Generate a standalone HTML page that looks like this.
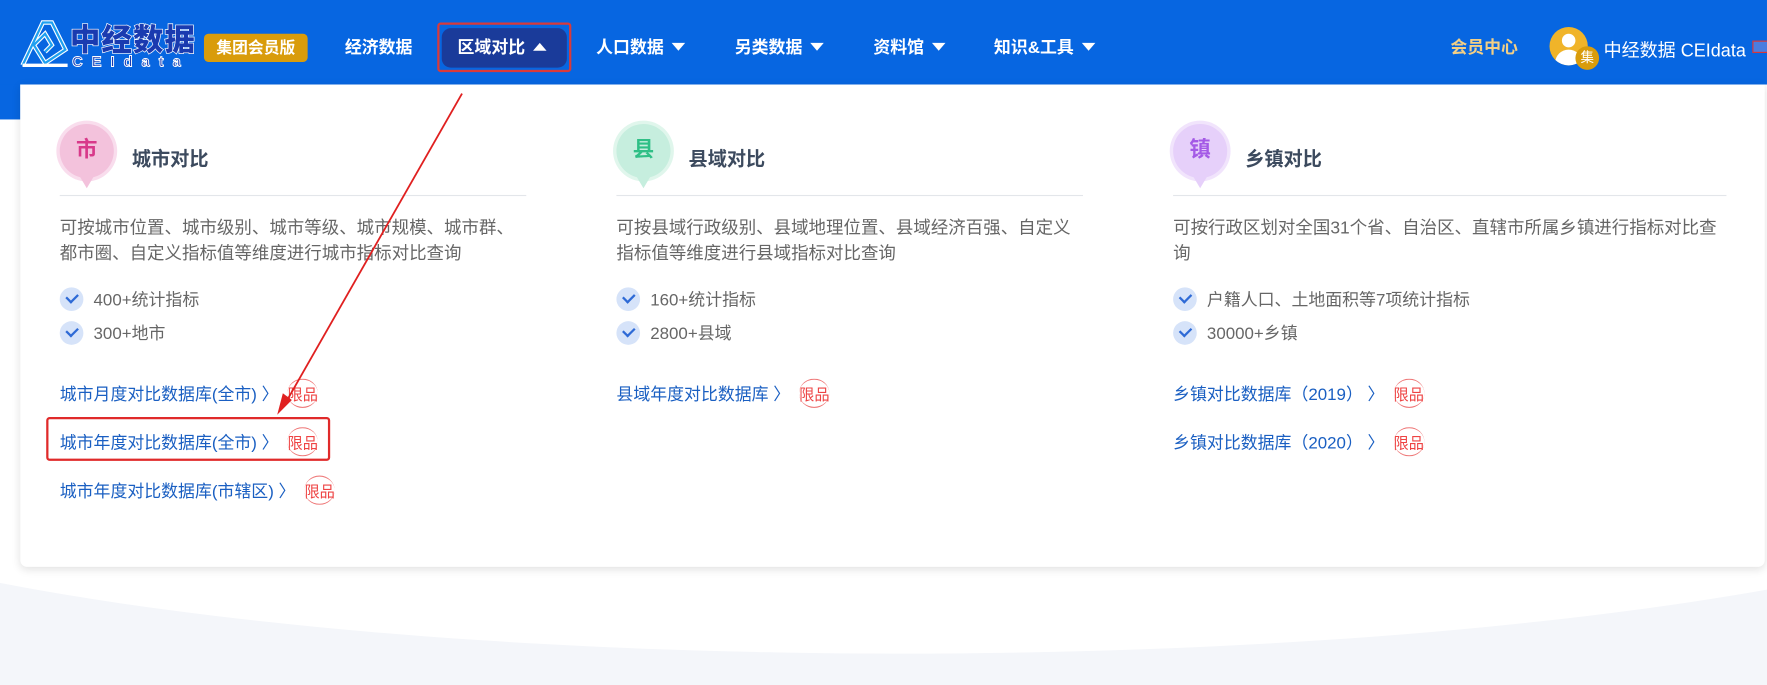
<!DOCTYPE html>
<html><head><meta charset="utf-8"><style>
*{margin:0;padding:0;box-sizing:border-box}
html,body{width:1767px;height:685px;overflow:hidden;background:#f4f6fa}
body{font-family:"Liberation Sans","Noto Sans CJK SC",sans-serif}
#w{position:absolute;left:0;top:0;width:1568px;height:608px;transform:scale(1.12691);transform-origin:0 0;background:#f4f6fa;overflow:hidden}
.abs{position:absolute}
.hdr{left:0;top:0;width:1568px;height:75px;background:#0766e1}
.nav{color:#fff;font-size:15px;font-weight:bold;top:31px;white-space:nowrap}
.tri{display:inline-block;width:0;height:0;border-left:6px solid transparent;border-right:6px solid transparent;border-top:7px solid #fff;margin-left:7px;vertical-align:2px}
.triu{border-top:none;border-bottom:7px solid #fff}
.panel{left:18px;top:75px;width:1548px;height:428px;background:#fff;border-radius:0 0 6px 6px;box-shadow:0 2px 8px rgba(0,0,0,.12)}
.col{position:absolute;top:0;width:414px}
.ic{position:absolute;left:0;top:35px;width:48px;height:48px;border-radius:50%;font-size:19px;font-weight:bold;text-align:center;line-height:48px}
.ic:after{content:"";position:absolute;left:18px;bottom:-9px;border-left:6px solid transparent;border-right:6px solid transparent;border-top:10px solid var(--c)}
.tt{position:absolute;left:64px;top:52px;font-size:17px;font-weight:bold;color:#3c4a5e}
.sep{position:absolute;left:0;top:98px;height:1px;background:#e3e6ea}
.ds{position:absolute;left:0;top:116px;font-size:15.5px;line-height:23px;color:#666}
.ck{position:absolute;left:0;font-size:15px;color:#666;white-space:nowrap}
.ck i{display:inline-block;width:21px;height:21px;border-radius:50%;background:#d6e3f9;vertical-align:-5px;margin-right:9px;position:relative}
.ck i:after{content:"";position:absolute;left:6px;top:5px;width:8px;height:5px;border-left:2px solid #2e6ad6;border-bottom:2px solid #2e6ad6;transform:rotate(-45deg)}
.lk{position:absolute;left:0;font-size:15px;color:#1a5fc2;white-space:nowrap}
.lk b{font-weight:normal;color:#e44;font-size:13.5px;margin-left:8px;display:inline-block;border-top:1px solid #e77;border-bottom:1px solid #e77;border-radius:50%;padding:2px 0}
</style></head><body><div id="w">
<div class="abs" style="left:0;top:0;width:1568px;height:480px;background:#fff"></div>
<div class="abs" style="left:-300px;top:180px;width:2200px;height:400px;border-radius:50%;background:#fff"></div>
<div class="abs" style="left:0;top:0;width:18px;height:106px;background:#0766e1"></div>
<div class="abs hdr"></div>
<svg class="abs" style="left:16px;top:16px" width="46" height="46" viewBox="0 0 46 46"><path d="M4 42 L22 4 L30 4 L42 28 L24 40 L14 24 L24 14 L30 24 L24 30" fill="none" stroke="#fff" stroke-width="4"/><path d="M4 42 L22 4 L30 4 L42 28 L24 40 L14 24 L24 14 L30 24 L24 30" fill="none" stroke="#1ea0f0" stroke-width="2"/><path d="M4 42 H44" stroke="#fff" stroke-width="3"/></svg>
<div class="abs" style="left:62px;top:14px;font-size:27px;font-weight:900;color:#1a3bb0;-webkit-text-stroke:1.2px #fff;paint-order:stroke fill;letter-spacing:1px">中经数据</div>
<div class="abs" style="left:64px;top:47px;font-size:13px;color:#1a3bb0;-webkit-text-stroke:.8px #fff;letter-spacing:8px;font-weight:bold">CEIdata</div>
<div class="abs" style="left:181px;top:30px;width:92px;height:25px;background:#d99c0b;border-radius:4px;color:#fff;font-size:14px;font-weight:bold;text-align:center;line-height:25px">集团会员版</div>
<div class="abs nav" style="left:306px">经济数据</div>
<div class="abs" style="left:388px;top:20px;width:119px;height:44px;border:2px solid #d93a3a;border-radius:3px"></div>
<div class="abs" style="left:392px;top:25px;width:111px;height:35px;background:#1a3b9a;border-radius:8px"></div>
<div class="abs nav" style="left:406px">区域对比<span class="tri triu"></span></div>
<div class="abs nav" style="left:529px">人口数据<span class="tri"></span></div>
<div class="abs nav" style="left:652px">另类数据<span class="tri"></span></div>
<div class="abs nav" style="left:775px">资料馆<span class="tri"></span></div>
<div class="abs nav" style="left:882px">知识&amp;工具<span class="tri"></span></div>
<div class="abs nav" style="left:1287px;color:#f3cf85">会员中心</div>
<div class="abs" style="left:1375px;top:24px;width:34px;height:34px;border-radius:50%;background:#f0b429;overflow:hidden"><div style="position:absolute;left:11px;top:6px;width:12px;height:12px;border-radius:50%;background:#fff"></div><div style="position:absolute;left:5px;top:20px;width:24px;height:16px;border-radius:12px 12px 0 0;background:#fff"></div></div>
<div class="abs" style="left:1398px;top:41px;width:21px;height:21px;border-radius:50%;background:#d99c0b;color:#fff;font-size:12px;text-align:center;line-height:21px">集</div>
<div class="abs" style="left:1423px;top:31px;color:#fff;font-size:16px">中经数据 CEIdata</div>
<div class="abs" style="left:1555px;top:36px;width:14px;height:11px;border:1px solid #d33;background:#4a7de0"></div>
<div class="abs panel">
 <div class="col" style="left:35px">
  <div class="ic" style="--c:#f3c2dc;background:#f3c2dc;color:#d8398a;box-shadow:0 0 0 3px #f9dded">市</div>
  <div class="tt">城市对比</div><div class="sep" style="width:414px"></div>
  <div class="ds" style="width:412px">可按城市位置、城市级别、城市等级、城市规模、城市群、都市圈、自定义指标值等维度进行城市指标对比查询</div>
  <div class="ck" style="top:180px"><i></i>400+统计指标</div>
  <div class="ck" style="top:210px"><i></i>300+地市</div>
  <div class="lk" style="top:261px">城市月度对比数据库(全市) 〉<b>限品</b></div>
  <div class="lk" style="top:304px">城市年度对比数据库(全市) 〉<b>限品</b></div>
  <div class="lk" style="top:347px">城市年度对比数据库(市辖区) 〉<b>限品</b></div>
 </div>
 <div class="col" style="left:529px">
  <div class="ic" style="--c:#c6eede;background:#c6eede;color:#2fbf86;box-shadow:0 0 0 3px #e0f6ec">县</div>
  <div class="tt">县域对比</div><div class="sep" style="width:414px"></div>
  <div class="ds" style="width:412px">可按县域行政级别、县域地理位置、县域经济百强、自定义指标值等维度进行县域指标对比查询</div>
  <div class="ck" style="top:180px"><i></i>160+统计指标</div>
  <div class="ck" style="top:210px"><i></i>2800+县域</div>
  <div class="lk" style="top:261px">县域年度对比数据库 〉<b>限品</b></div>
 </div>
 <div class="col" style="left:1023px;width:492px">
  <div class="ic" style="--c:#e6d0fa;background:#e6d0fa;color:#a45ae6;box-shadow:0 0 0 3px #f1e4fc">镇</div>
  <div class="tt">乡镇对比</div><div class="sep" style="width:491px"></div>
  <div class="ds" style="width:492px">可按行政区划对全国31个省、自治区、直辖市所属乡镇进行指标对比查询</div>
  <div class="ck" style="top:180px"><i></i>户籍人口、土地面积等7项统计指标</div>
  <div class="ck" style="top:210px"><i></i>30000+乡镇</div>
  <div class="lk" style="top:261px">乡镇对比数据库（2019） 〉<b>限品</b></div>
  <div class="lk" style="top:304px">乡镇对比数据库（2020） 〉<b>限品</b></div>
 </div>
</div>
<div class="abs" style="left:41px;top:370px;width:252px;height:39px;border:2px solid #e02a2a;border-radius:3px"></div>
<svg class="abs" style="left:0;top:0" width="1568" height="608"><line x1="410" y1="83" x2="252" y2="360" stroke="#e02020" stroke-width="1.6"/><path d="M246 368 L251 349 L259 355 Z" fill="#e02020"/></svg>
</div></body></html>
